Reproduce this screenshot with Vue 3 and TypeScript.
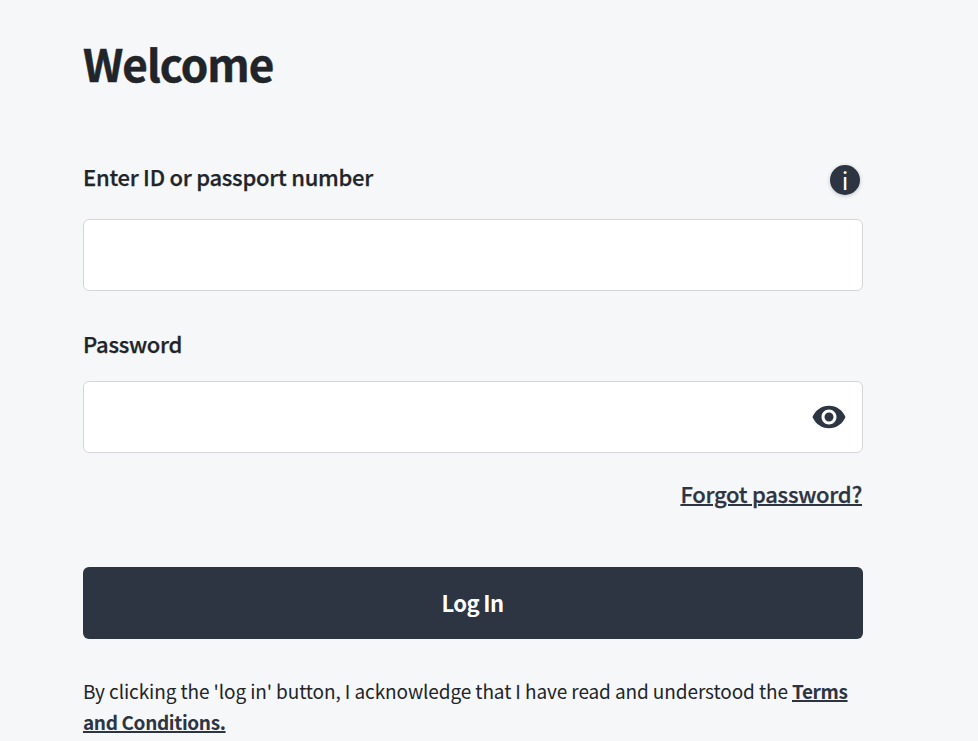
<script setup lang="ts">
const title = 'Welcome'
</script>

<template>
  <main class="page">
    <h1 class="title">{{ title }}</h1>
    <div class="label-row">
      <label class="label id-label">Enter ID or passport number</label>
      <span class="info">i</span>
    </div>
    <input class="field" type="text" />
    <label class="label pw-label">Password</label>
    <div class="pw-wrap">
      <input class="field" type="password" />
      <svg class="eye" viewBox="0 0 24 24" width="36" height="36" aria-hidden="true">
        <path fill="#2d3442" d="M12 4.5C7 4.5 2.73 7.61 1 12c1.73 4.39 6 7.5 11 7.5s9.27-3.11 11-7.5c-1.73-4.39-6-7.5-11-7.5zM12 17c-2.76 0-5-2.24-5-5s2.24-5 5-5 5 2.24 5 5-2.24 5-5 5zm0-8c-1.66 0-3 1.34-3 3s1.34 3 3 3 3-1.34 3-3-1.34-3-3-3z"/>
      </svg>
    </div>
    <div class="forgot-row"><a class="forgot" href="#">Forgot password?</a></div>
    <button class="login" type="button">Log In</button>
    <p class="terms">By clicking the 'log in' button, I acknowledge that I have read and understood the <a href="#">Terms and Conditions.</a></p>
  </main>
</template>

<style scoped>
.page {
  width: 780px;
  margin-left: 83px;
  font-family: "Noto Sans CJK SC", "Noto Sans", sans-serif;
  color: #212529;
}
.title {
  margin: 0;
  padding-top: 34px;
  font-size: 44px;
  line-height: 58px;
  font-weight: 700;
  letter-spacing: -0.95px;
  -webkit-text-stroke: 0.5px #212529;
}
.label-row {
  display: flex;
  justify-content: space-between;
  align-items: center;
  margin-top: 56px;
  height: 71px;
  padding-bottom: 8px;
  box-sizing: border-box;
  padding-right: 3px;
}
.label {
  font-size: 22px;
  font-weight: 500;
  line-height: 30px;
  letter-spacing: -0.26px;
  -webkit-text-stroke: 0.25px #212529;
}
.id-label {
  padding-bottom: 8px;
}
.info {
  width: 30px;
  height: 30px;
  border-radius: 50%;
  background: #2d3442;
  color: #fff;
  display: flex;
  align-items: center;
  justify-content: center;
  font-size: 24px;
  font-weight: 400;
  line-height: 30px;
  box-shadow: 0 1px 4px rgba(0, 0, 0, 0.2);
}
.field {
  display: block;
  width: 100%;
  height: 72px;
  box-sizing: border-box;
  border: 1px solid #d4d6dc;
  border-radius: 6px;
  background: #fff;
}
.pw-label {
  display: block;
  margin-top: 37px;
  margin-bottom: 23px;
}
.pw-wrap {
  position: relative;
}
.eye {
  position: absolute;
  right: 16px;
  top: 18px;
}
.forgot-row {
  text-align: right;
  margin-top: 25px;
  padding-right: 1px;
  line-height: 30px;
}
.forgot {
  font-size: 22px;
  font-weight: 500;
  letter-spacing: -0.26px;
  color: #2d3442;
  text-decoration-thickness: 2px;
  -webkit-text-stroke: 0.25px #2d3442;
}
.login {
  display: block;
  width: 100%;
  height: 72px;
  margin-top: 56px;
  padding: 0 1px 2px 0;
  border: none;
  border-radius: 6px;
  background: #2d3442;
  color: #fff;
  font: 700 22px "Noto Sans CJK SC", sans-serif;
  letter-spacing: -0.6px;
}
.terms {
  margin: 36px 0 0;
  font-size: 19px;
  line-height: 31px;
  letter-spacing: -0.1px;
}
.terms a {
  color: #2d3442;
  font-weight: 700;
  letter-spacing: -0.36px;
  text-decoration-thickness: 2px;
}
</style>

<style>
html, body {
  background: #f6f7f9;
}
</style>
